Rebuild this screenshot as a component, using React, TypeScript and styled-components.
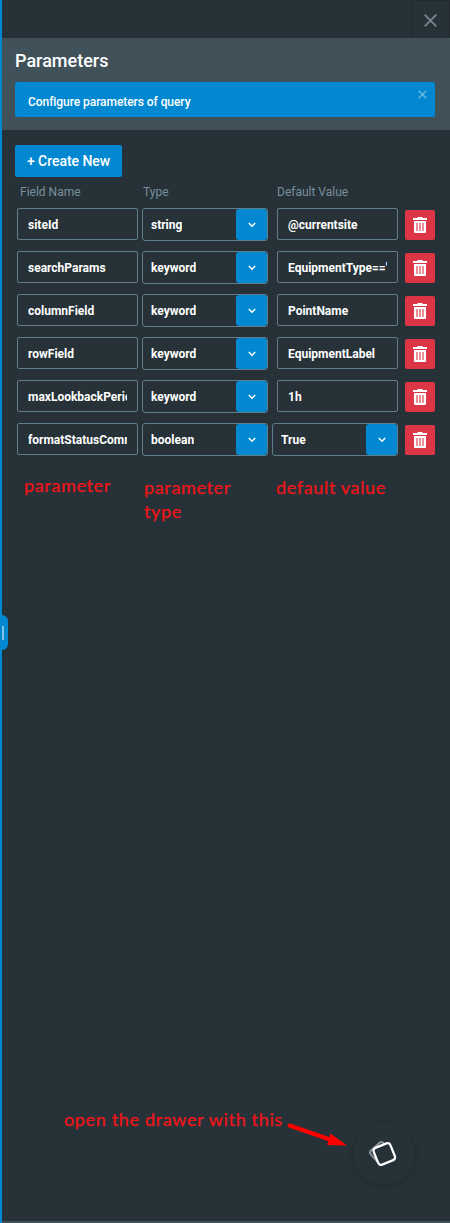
import React from "react";
import styled, { createGlobalStyle } from "styled-components";

const GlobalStyle = createGlobalStyle`
  *, *::before, *::after { box-sizing: border-box; }
  body { margin: 0; background: #273238; font-family: Roboto, "Liberation Sans", sans-serif; }
`;

const Drawer = styled.main`
  position: relative;
  width: 450px;
  height: 1223px;
  display: flex;
  flex-direction: column;
  overflow: hidden;
  background: #273238;
  border-left: 2px solid #0288d1;
`;

const TitleBar = styled.div`
  flex: none;
  height: 38px;
  display: flex;
  justify-content: flex-end;
`;

const CloseButton = styled.button`
  width: 39px;
  padding: 1px 0 0;
  border: 1px solid #1f292e;
  border-bottom: 0;
  background: transparent;
  display: flex;
  align-items: center;
  justify-content: center;
`;

const Header = styled.header`
  flex: none;
  height: 92px;
  padding: 11px 15px 0 13px;
  background: #40515a;
`;

const Title = styled.h1`
  margin: 0 0 9px;
  font-size: 18px;
  line-height: 24px;
  font-weight: 500;
  color: #fff;
`;

const Banner = styled.div`
  display: flex;
  justify-content: space-between;
  align-items: flex-start;
  height: 35px;
  padding: 8px 8px 0 13px;
  border-radius: 2px;
  background: #0288d1;
  color: #fff;
  font-size: 12px;
  line-height: 24px;
  font-weight: 500;
  letter-spacing: -0.06px;
`;

const Content = styled.section`
  flex: 1;
  padding: 15px 15px 0 13px;
`;

const CreateButton = styled.button`
  display: block;
  width: 107px;
  height: 32px;
  padding: 0;
  border: 0;
  border-radius: 2px;
  background: #0288d1;
  color: #fff;
  font: 500 14px Roboto, sans-serif;
  letter-spacing: -0.04px;
`;

const Columns = styled.div`
  display: grid;
  grid-template-columns: 123px 134px 1fr;
  padding: 6px 0 0 5px;
  height: 31px;
  font-size: 12px;
  line-height: 18px;
  color: #78909c;
`;

const Rows = styled.div`
  display: flex;
  flex-direction: column;
  gap: 10px;
`;

const Row = styled.div`
  display: flex;
  align-items: flex-start;
  height: 33px;
  padding-left: 2px;
`;

const Field = styled.div<{ $gap?: number }>`
  width: 121px;
  height: 32px;
  margin-left: ${(p) => p.$gap ?? 0}px;
  padding: 0 10px;
  border: 1px solid #607d8b;
  border-radius: 2px;
`;

const FieldText = styled.div`
  overflow: hidden;
  height: 30px;
  white-space: nowrap;
  font-size: 12px;
  line-height: 32px;
  font-weight: 700;
  color: #fff;
`;

const SelectBox = styled.div`
  width: 126px;
  height: 33px;
  margin-left: 4px;
  padding-left: 8px;
  display: flex;
  justify-content: space-between;
  border: 1px solid #607d8b;
  border-radius: 3px;
`;

const SelectToggle = styled.div`
  width: 31px;
  height: 31px;
  border-radius: 3px;
  background: #0288d1;
  display: flex;
  align-items: center;
  justify-content: center;
`;

const DeleteButton = styled.button`
  width: 30px;
  height: 30px;
  margin: 2px 0 0 7px;
  padding: 0;
  border: 0;
  border-radius: 2px;
  background: #dc3545;
  display: flex;
  align-items: center;
  justify-content: center;
`;

const BottomEdge = styled.div`
  flex: none;
  height: 2px;
  background: #40515a;
`;

const ResizeHandle = styled.div`
  position: absolute;
  left: 0;
  top: 615px;
  width: 6px;
  height: 35px;
  padding-top: 11px;
  border-radius: 0 6px 6px 0;
  background: #0288d1;
`;

const Grip = styled.div`
  width: 2px;
  height: 14px;
  background: #81c3e8;
`;

const Fab = styled.button`
  position: absolute;
  left: 351px;
  top: 1123px;
  width: 62px;
  height: 62px;
  padding: 0;
  border: 0;
  border-radius: 50%;
  background: #273238;
  box-shadow: 0 1px 5px rgba(0, 0, 0, 0.25);
`;

const Note = styled.p<{ $x: number; $y: number }>`
  position: absolute;
  left: ${(p) => p.$x - 2}px;
  top: ${(p) => p.$y}px;
  margin: 0;
  font-family: Lato, sans-serif;
  font-size: 18px;
  line-height: 24px;
  letter-spacing: 0.65px;
  white-space: pre;
  color: #f01418;
  -webkit-text-stroke: 0.25px #f01418;
`;

const Arrow = styled.svg`
  position: absolute;
  left: 284px;
  top: 1118px;
`;

const Cross = ({ size, color, width }: { size: number; color: string; width: number }) => (
  <svg width={size} height={size} viewBox={`0 0 ${size} ${size}`}>
    <path d={`M.7 .7L${size - 0.7} ${size - 0.7}M${size - 0.7} .7L.7 ${size - 0.7}`} stroke={color} strokeWidth={width} />
  </svg>
);

const Trash = () => (
  <svg width="14" height="16" viewBox="0 0 14 16">
    <path d="M0 1h4.5V0h5v1H14v2H0z" fill="#fff" />
    <path d="M1 4h12v11a1 1 0 0 1-1 1H2a1 1 0 0 1-1-1z" fill="#fff" />
    <path d="M3 6h2v8H3zM6 6h2v8H6zM9 6h2v8H9z" fill="#eb9099" />
  </svg>
);

const Select = ({ value }: { value: string }) => (
  <SelectBox>
    <FieldText>{value}</FieldText>
    <SelectToggle>
      <svg width="8" height="6" viewBox="0 0 8 6">
        <path d="M.8 1L4 4.2L7.2 1" fill="none" stroke="#fff" strokeWidth="1.5" />
      </svg>
    </SelectToggle>
  </SelectBox>
);

const parameters = [
  { name: "siteId", type: "string", value: "@currentsite" },
  { name: "searchParams", type: "keyword", value: "EquipmentType=='" },
  { name: "columnField", type: "keyword", value: "PointName" },
  { name: "rowField", type: "keyword", value: "EquipmentLabel" },
  { name: "maxLookbackPeriod", type: "keyword", value: "1h" },
  { name: "formatStatusCommand", type: "boolean", value: "True" },
];

export default function App() {
  return (
    <>
      <GlobalStyle />
      <Drawer>
        <TitleBar>
          <CloseButton aria-label="Close">
            <Cross size={13} color="#75858d" width={1.9} />
          </CloseButton>
        </TitleBar>
        <Header>
          <Title>Parameters</Title>
          <Banner>
            <span>Configure parameters of query</span>
            <Cross size={9} color="#67b8e3" width={1.5} />
          </Banner>
        </Header>
        <Content>
          <CreateButton>+ Create New</CreateButton>
          <Columns>
            <span>Field Name</span>
            <span>Type</span>
            <span>Default Value</span>
          </Columns>
          <Rows>
            {parameters.map((p) => (
              <Row key={p.name}>
                <Field>
                  <FieldText>{p.name}</FieldText>
                </Field>
                <Select value={p.type} />
                {p.type === "boolean" ? (
                  <Select value={p.value} />
                ) : (
                  <Field $gap={9}>
                    <FieldText>{p.value}</FieldText>
                  </Field>
                )}
                <DeleteButton aria-label="Delete">
                  <Trash />
                </DeleteButton>
              </Row>
            ))}
          </Rows>
        </Content>
        <BottomEdge />
        <ResizeHandle>
          <Grip />
        </ResizeHandle>
        <Note $x={24} $y={473}>parameter</Note>
        <Note $x={144} $y={475}>{"parameter\ntype"}</Note>
        <Note $x={276} $y={475}>default value</Note>
        <Note $x={64} $y={1107}>open the drawer with this</Note>
        <Arrow width="64" height="32" viewBox="286 1118 64 32">
          <path d="M289.500 1125.500L330 1139.500" stroke="#f00" strokeWidth="4" strokeLinecap="round" />
          <path d="M330.500 1133.500L347 1145.500L327 1145z" fill="#f00" />
        </Arrow>
        <Fab aria-label="Open drawer">
          <svg width="62" height="62" viewBox="353 1123 62 62">
            <rect x="-8.500" y="-8.500" width="17" height="17" rx="3" transform="translate(381 1153) rotate(-42)" fill="none" stroke="#8b9398" strokeWidth="2" />
            <rect x="-9" y="-9" width="18" height="18" rx="3" transform="translate(384.300 1154) rotate(-22)" fill="#273238" stroke="#fff" strokeWidth="2.300" />
          </svg>
        </Fab>
      </Drawer>
    </>
  );
}
